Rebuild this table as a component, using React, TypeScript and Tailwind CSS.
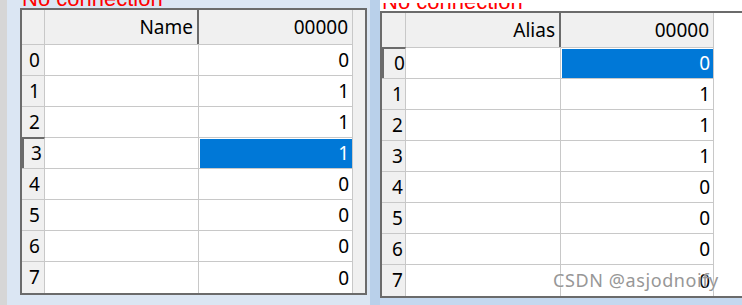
import React from "react";

interface GridProps {
  label: string;
  columnTitle: string;
  values: number[];
  selectedRow: number;
  widths: { head: string; name: string; value: string; pad: string };
  tail: string;
}

// Old-style Windows table: row header column, one text column and one value column
function DataGrid({ label, columnTitle, values, selectedRow, widths, tail }: GridProps) {
  return (
    <div className="flex flex-col">
      {/* Status label, mostly scrolled off the top */}
      <div className="h-[8px] overflow-hidden leading-[22px] text-[22px] text-[#ff0000] font-['Liberation_Sans',sans-serif]">
        <div className="-mt-[12px] whitespace-nowrap pl-[2px]">{label}</div>
      </div>

      <div className={`border-2 border-[#6b6b6b] ${tail} flex`}>
        <div className="flex flex-col">
          {/* Header row */}
          <div className="flex h-[35px] bg-[#f0f0f0] border-b border-[#c8c8c8]">
            <div className={`${widths.head} border-r border-[#c8c8c8]`} />
            <div
              className={`${widths.name} border-r-2 border-[#6b6b6b] flex items-center justify-end pr-[4px]`}
            >
              {columnTitle}
            </div>
            <div className={`${widths.value} border-r border-[#c8c8c8] flex items-center justify-end pr-[4px]`}>
              00000
            </div>
          </div>

          {values.map((v, i) => {
            const isCurrent = i === selectedRow;
            return (
              <div key={i} className="flex h-[31px] bg-white border-b border-[#c8c8c8] last:border-b-0">
                <div
                  className={`${widths.head} ${widths.pad} bg-[#f0f0f0] border-r border-[#c8c8c8] flex items-center ${
                    isCurrent ? "border-l-2 border-t-2 border-l-[#6b6b6b] border-t-[#6b6b6b] -mt-[1px]" : ""
                  }`}
                >
                  {i}
                </div>
                <div className={`${widths.name} border-r border-[#c8c8c8]`} />
                <div className={`${widths.value} border-r border-[#c8c8c8] pl-[1px] pt-[1px]`}>
                  <div
                    className={`h-full flex items-center justify-end pr-[3px] ${
                      isCurrent ? "bg-[#0078d7] text-white" : ""
                    }`}
                  >
                    {v}
                  </div>
                </div>
              </div>
            );
          })}
        </div>
        <div className="flex-1" />
      </div>
    </div>
  );
}

export default function App() {
  const left = [0, 1, 1, 1, 0, 0, 0, 0];
  const right = [0, 1, 1, 1, 0, 0, 0, 0];

  return (
    <div className="relative w-[742px] h-[305px] overflow-hidden flex bg-[#b9d0ea] text-[19px] text-black font-['Noto_Sans',sans-serif]">
      {/* window edge */}
      <div className="w-[7px] bg-[#d6d6d6]" />

      <div className="w-[363px] bg-[#dbe6f3] pl-[13px] pr-[3px]">
        <DataGrid
          label="No connection"
          columnTitle="Name"
          values={left}
          selectedRow={3}
          widths={{ head: "w-[23px]", name: "w-[154px]", value: "w-[154px]", pad: "pl-[7px]" }}
          tail="bg-[#f0f0f0]"
        />
      </div>

      <div className="w-[10px]" />

      <div className="flex-1 flex flex-col">
        <div className="bg-white pt-[3px]">
          <DataGrid
            label="No connection"
            columnTitle="Alias"
            values={right}
            selectedRow={0}
            widths={{ head: "w-[24px]", name: "w-[155px]", value: "w-[153px]", pad: "pl-[10px]" }}
            tail="bg-white border-r-0"
          />
        </div>
        <div className="flex-1 bg-[#c4d8ef]" />
      </div>

      <div className="absolute left-[553px] top-[267px] text-[18px] tracking-[0.6px] text-[#979797] font-['Noto_Sans',sans-serif] whitespace-nowrap [text-shadow:0_0_2px_#ffffff]">
        CSDN @asjodnoify
      </div>
    </div>
  );
}
